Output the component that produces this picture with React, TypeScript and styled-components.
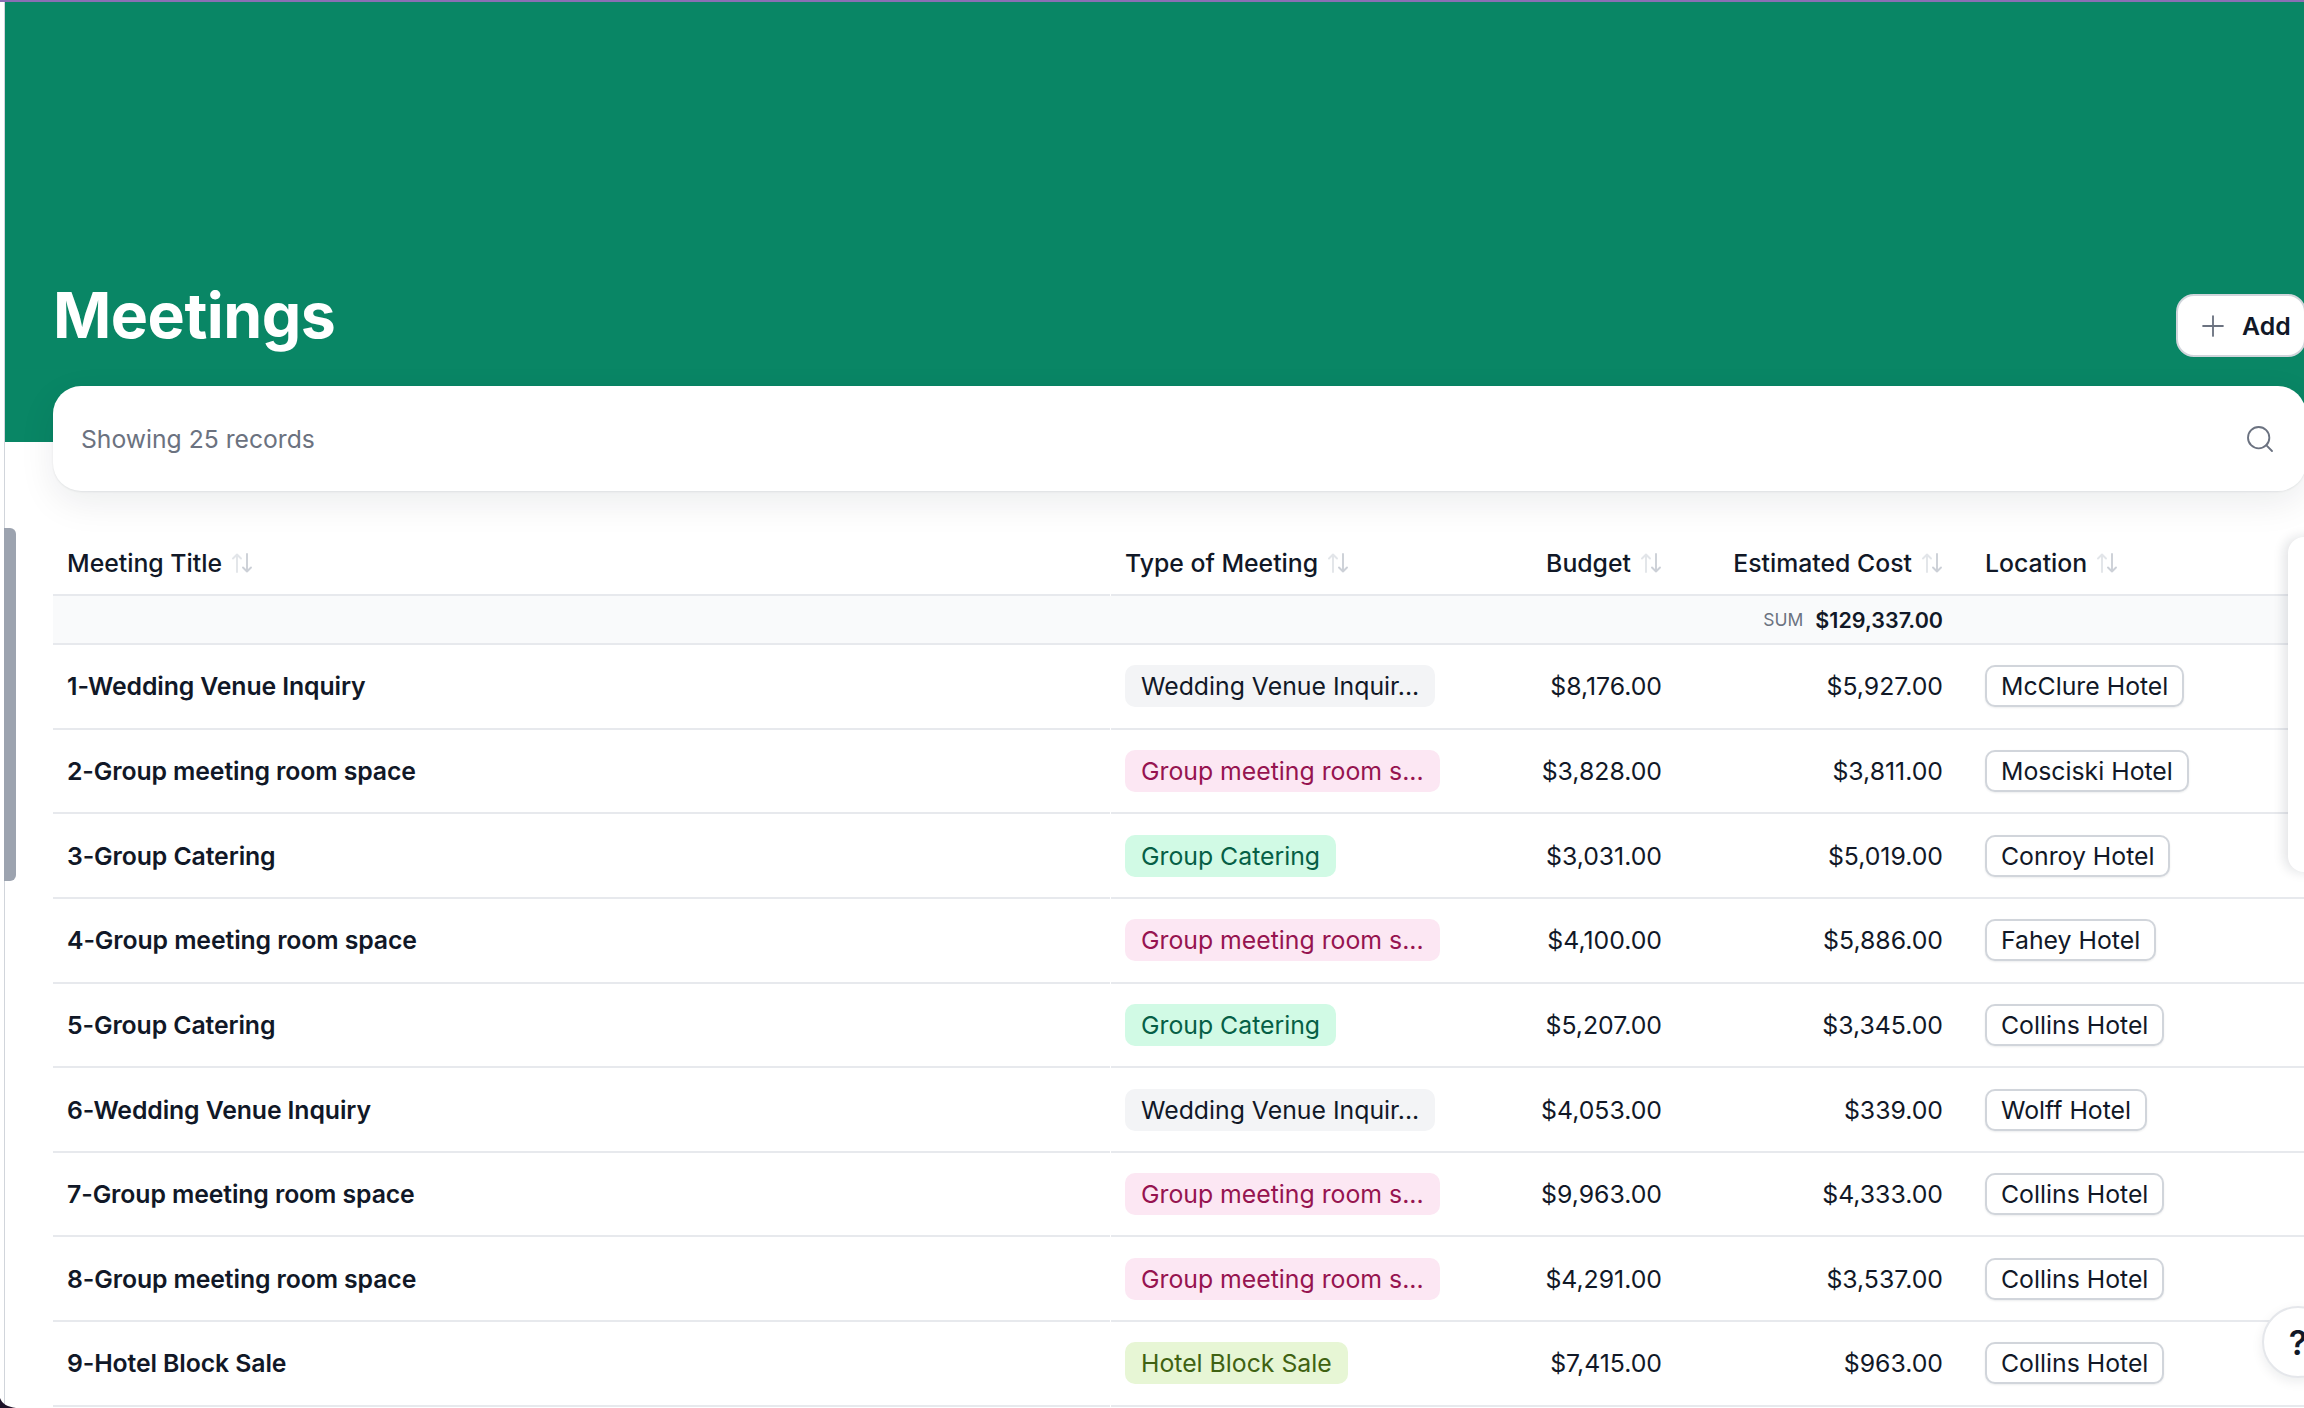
import { Fragment } from "react";
import styled, { createGlobalStyle } from "styled-components";
import { Plus, Search } from "lucide-react";

const GlobalStyle = createGlobalStyle`
  html, body {
    margin: 0;
    padding: 0;
    background: #ffffff;
    overflow: hidden;
  }
  * {
    box-sizing: border-box;
  }
`;

const Page = styled.div`
  position: relative;
  width: 2304px;
  height: 1408px;
  overflow: hidden;
  background: #ffffff;
  font-family: Inter, "Liberation Sans", sans-serif;
  color: #111827;
  border-top: 2px solid #8a6fb4;
  padding-left: 4px;
`;

const Frame = styled.div`
  width: 2302px;
  height: 100%;
  border-left: 1px solid #d1d5db;
`;

const Hero = styled.header`
  height: 440px;
  padding: 0 0 85px 48px;
  background: #098665;
  display: flex;
  align-items: flex-end;
  justify-content: space-between;
`;

const Title = styled.h1`
  margin: 0 0 4px;
  font-size: 62.6px;
  line-height: 76px;
  font-weight: 700;
  letter-spacing: -0.5px;
  color: #ffffff;
`;

const AddButton = styled.button`
  width: 130px;
  height: 63px;
  margin: 0;
  padding: 0 0 0 18px;
  border: 2px solid #d1d5db;
  border-radius: 18px;
  background: #ffffff;
  display: flex;
  align-items: center;
  gap: 12px;
  font-family: inherit;
  font-size: 24.8px;
  font-weight: 600;
  color: #111827;
  svg {
    color: #6b7280;
  }
`;

const Content = styled.main`
  margin-top: -56px;
  padding-left: 48px;
`;

const SearchCard = styled.div`
  height: 105px;
  padding: 0 28px 0 28px;
  border-radius: 28px;
  background: #ffffff;
  box-shadow: 0 12px 36px rgba(17, 24, 39, 0.08), 0 1px 2px rgba(17, 24, 39, 0.08);
  display: flex;
  align-items: center;
  justify-content: space-between;
  color: #6b7280;
  font-size: 24.7px;
`;

const SearchButton = styled.span`
  display: flex;
  margin-right: 2px;
`;

const Grid = styled.div`
  margin-top: 33px;
  display: grid;
  grid-template-columns: 1058px 420px 145px 281px 349px;
`;

const HeadCell = styled.div<{ $right?: boolean; $location?: boolean; $first?: boolean }>`
  height: 72px;
  padding: 8px 14px 0 ${(p) => (p.$location ? "28px" : "14px")};
  margin-right: ${(p) => (p.$first ? "1px" : "0")};
  border-bottom: 2px solid #e7e9ed;
  display: flex;
  align-items: center;
  justify-content: ${(p) => (p.$right ? "flex-end" : "flex-start")};
  gap: 9px;
  font-size: 24.8px;
  font-weight: 500;
  white-space: nowrap;
`;

const SumCell = styled.div<{ $right?: boolean }>`
  height: 49px;
  padding: 0 14px;
  background: #f9fafb;
  border-bottom: 2px solid #e7e9ed;
  display: flex;
  align-items: center;
  justify-content: ${(p) => (p.$right ? "flex-end" : "flex-start")};
  gap: 12px;
`;

const SumLabel = styled.span`
  font-size: 17.5px;
  color: #6b7280;
`;

const SumValue = styled.span`
  font-size: 21.5px;
  font-weight: 600;
`;

const Cell = styled.div<{ $right?: boolean; $location?: boolean; $first?: boolean }>`
  height: 84.65px;
  padding: 0 14px 0 ${(p) => (p.$location ? "28px" : "14px")};
  margin-right: ${(p) => (p.$first ? "1px" : "0")};
  border-bottom: 2px solid #e7e9ed;
  display: flex;
  align-items: center;
  justify-content: ${(p) => (p.$right ? "flex-end" : "flex-start")};
  font-size: 24.8px;
  white-space: nowrap;
`;

const RowTitle = styled.span`
  font-weight: 600;
  letter-spacing: -0.1px;
`;

const tones = {
  gray: { bg: "#f3f4f6", fg: "#111827" },
  pink: { bg: "#fce7f3", fg: "#961450" },
  green: { bg: "#d1fae5", fg: "#065f46" },
  lime: { bg: "#e7f6d5", fg: "#3f6212" },
};

type Tone = keyof typeof tones;

const TypePill = styled.span<{ $tone: Tone }>`
  height: 42px;
  padding: 0 16px;
  border-radius: 10px;
  display: inline-flex;
  align-items: center;
  background: ${(p) => tones[p.$tone].bg};
  color: ${(p) => tones[p.$tone].fg};
`;

const LocationPill = styled.span`
  height: 42px;
  padding: 0 14px;
  border: 2px solid #d1d5db;
  border-radius: 10px;
  display: inline-flex;
  align-items: center;
  background: #ffffff;
  box-shadow: 0 1px 2px rgba(17, 24, 39, 0.08);
`;

const SidePanel = styled.aside`
  position: absolute;
  left: 2288px;
  top: 535px;
  width: 60px;
  height: 335px;
  border-radius: 16px 0 0 16px;
  background: #ffffff;
  box-shadow: -4px 0 12px rgba(17, 24, 39, 0.12);
`;

const ScrollThumb = styled.div`
  position: absolute;
  left: 4px;
  top: 526px;
  width: 12px;
  height: 353px;
  border-radius: 0 6px 6px 0;
  background: #9ca3af;
`;

const HelpButton = styled.button`
  position: absolute;
  left: 2262px;
  top: 1304px;
  width: 72px;
  height: 72px;
  padding: 0;
  border: 2px solid #e5e7eb;
  border-radius: 50%;
  background: #ffffff;
  box-shadow: 0 4px 12px rgba(17, 24, 39, 0.08);
  font-family: inherit;
  font-size: 34px;
  font-weight: 600;
  color: #111827;
`;

const WindowCorner = styled.svg`
  position: absolute;
  left: 0;
  bottom: 0;
  width: 16px;
  height: 10px;
`;

function SortIcon() {
  return (
    <svg width="22" height="22" viewBox="0 0 22 22" fill="none" strokeWidth="1.9" strokeLinecap="round" strokeLinejoin="round">
      <path d="M6 20V2.5M2 6.5l4-4 4 4" stroke="#e2e5e9" />
      <path d="M16 2v17.5M12 15.5l4 4 4-4" stroke="#ccd0d7" />
    </svg>
  );
}

const rows: { title: string; type: string; tone: Tone; budget: string; cost: string; location: string }[] = [
  { title: "1-Wedding Venue Inquiry", type: "Wedding Venue Inquir...", tone: "gray", budget: "$8,176.00", cost: "$5,927.00", location: "McClure Hotel" },
  { title: "2-Group meeting room space", type: "Group meeting room s...", tone: "pink", budget: "$3,828.00", cost: "$3,811.00", location: "Mosciski Hotel" },
  { title: "3-Group Catering", type: "Group Catering", tone: "green", budget: "$3,031.00", cost: "$5,019.00", location: "Conroy Hotel" },
  { title: "4-Group meeting room space", type: "Group meeting room s...", tone: "pink", budget: "$4,100.00", cost: "$5,886.00", location: "Fahey Hotel" },
  { title: "5-Group Catering", type: "Group Catering", tone: "green", budget: "$5,207.00", cost: "$3,345.00", location: "Collins Hotel" },
  { title: "6-Wedding Venue Inquiry", type: "Wedding Venue Inquir...", tone: "gray", budget: "$4,053.00", cost: "$339.00", location: "Wolff Hotel" },
  { title: "7-Group meeting room space", type: "Group meeting room s...", tone: "pink", budget: "$9,963.00", cost: "$4,333.00", location: "Collins Hotel" },
  { title: "8-Group meeting room space", type: "Group meeting room s...", tone: "pink", budget: "$4,291.00", cost: "$3,537.00", location: "Collins Hotel" },
  { title: "9-Hotel Block Sale", type: "Hotel Block Sale", tone: "lime", budget: "$7,415.00", cost: "$963.00", location: "Collins Hotel" },
];

export default function App() {
  return (
    <Page>
      <GlobalStyle />
      <Frame>
        <Hero>
          <Title>Meetings</Title>
          <AddButton>
            <Plus size={34} strokeWidth={1.3} />
            Add
          </AddButton>
        </Hero>
        <Content>
          <SearchCard>
            Showing 25 records
            <SearchButton>
              <Search size={32} strokeWidth={1.4} />
            </SearchButton>
          </SearchCard>
          <Grid>
            <HeadCell $first>Meeting Title <SortIcon /></HeadCell>
            <HeadCell>Type of Meeting <SortIcon /></HeadCell>
            <HeadCell $right>Budget <SortIcon /></HeadCell>
            <HeadCell $right>Estimated Cost <SortIcon /></HeadCell>
            <HeadCell $location>Location <SortIcon /></HeadCell>

            <SumCell />
            <SumCell />
            <SumCell />
            <SumCell $right>
              <SumLabel>SUM</SumLabel>
              <SumValue>$129,337.00</SumValue>
            </SumCell>
            <SumCell />

            {rows.map((row) => (
              <Fragment key={row.title}>
                <Cell $first><RowTitle>{row.title}</RowTitle></Cell>
                <Cell><TypePill $tone={row.tone}>{row.type}</TypePill></Cell>
                <Cell $right>{row.budget}</Cell>
                <Cell $right>{row.cost}</Cell>
                <Cell $location><LocationPill>{row.location}</LocationPill></Cell>
              </Fragment>
            ))}
          </Grid>
        </Content>
      </Frame>
      <ScrollThumb />
      <SidePanel />
      <HelpButton>?</HelpButton>
      <WindowCorner viewBox="0 0 16 10">
        <path d="M0 0C2 6 8 9 16 10H0Z" fill="#1d1228" />
      </WindowCorner>
    </Page>
  );
}
